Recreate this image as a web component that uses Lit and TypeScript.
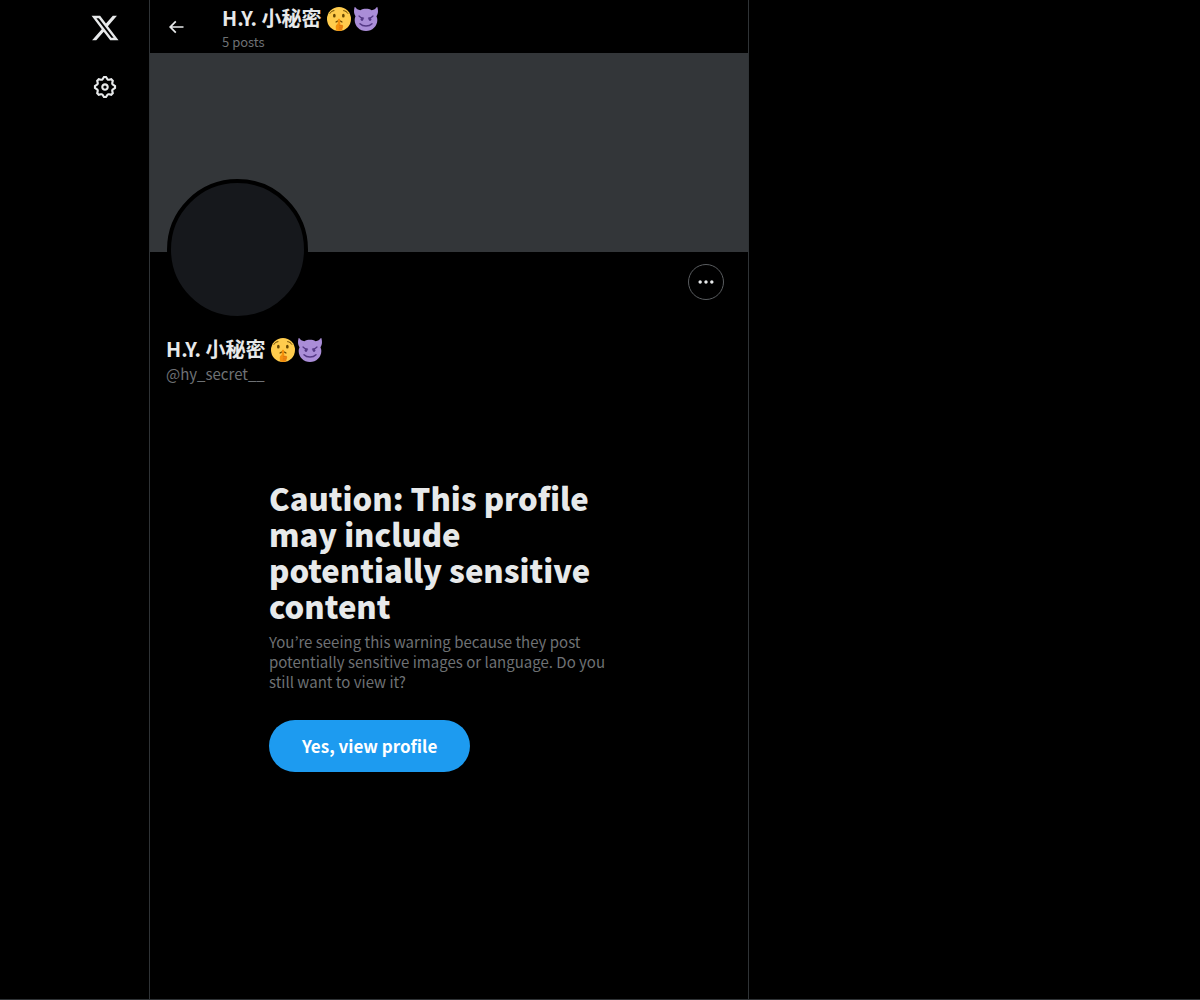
import { LitElement, html, css, svg } from "lit";
import { customElement, property } from "lit/decorators.js";

const ICONS = {
  logo: "M18.244 2.25h3.308l-7.227 8.26 8.502 11.24H16.17l-5.214-6.817L4.99 21.75H1.68l7.73-8.835L1.254 2.25H8.08l4.713 6.231zm-1.161 17.52h1.833L7.084 4.126H5.117z",
  settings:
    "M10.54 1.75h2.92l1.57 2.36c.11.17.32.25.53.21l2.53-.59 2.17 2.17-.58 2.54c-.05.2.04.41.21.53l2.36 1.57v2.92l-2.36 1.57c-.17.12-.26.33-.21.53l.58 2.54-2.17 2.17-2.53-.59c-.21-.04-.42.04-.53.21l-1.57 2.36h-2.92l-1.58-2.36c-.11-.17-.32-.25-.52-.21l-2.54.59-2.17-2.17.58-2.54c.05-.2-.03-.41-.21-.53l-2.35-1.57v-2.92L4.1 8.97c.18-.12.26-.33.21-.53L3.73 5.9 5.9 3.73l2.54.59c.2.04.41-.04.52-.21l1.58-2.36zm1.07 2l-.98 1.47C10.05 6.08 9 6.5 7.99 6.27l-1.46-.34-.6.6.33 1.46c.24 1.01-.18 2.07-1.05 2.64l-1.46.98v.78l1.46.98c.87.57 1.29 1.63 1.05 2.64l-.33 1.46.6.6 1.46-.34c1.01-.23 2.06.19 2.64 1.05l.98 1.47h.78l.97-1.47c.58-.86 1.63-1.28 2.65-1.05l1.45.34.61-.6-.34-1.46c-.23-1.01.18-2.07 1.05-2.64l1.47-.98v-.78l-1.47-.98c-.87-.57-1.28-1.63-1.05-2.64l.34-1.46-.61-.6-1.45.34c-1.02.23-2.07-.19-2.65-1.05l-.97-1.47h-.78zM12 10.5c-.83 0-1.5.67-1.5 1.5s.67 1.5 1.5 1.5c.82 0 1.5-.67 1.5-1.5s-.68-1.5-1.5-1.5zM8.5 12c0-1.93 1.56-3.5 3.5-3.5 1.93 0 3.5 1.57 3.5 3.5s-1.57 3.5-3.5 3.5c-1.94 0-3.5-1.57-3.5-3.5z",
  back: "M7.414 13l5.043 5.04-1.414 1.42L3.586 12l7.457-7.46 1.414 1.42L7.414 11H21v2H7.414z",
  more: "M3 12c0-1.1.9-2 2-2s2 .9 2 2-.9 2-2 2-2-.9-2-2zm9 2c1.1 0 2-.9 2-2s-.9-2-2-2-2 .9-2 2 .9 2 2 2zm7 0c1.1 0 2-.9 2-2s-.9-2-2-2-2 .9-2 2 .9 2 2 2z",
};

@customElement("ui-icon")
class UiIcon extends LitElement {
  @property() name: keyof typeof ICONS = "logo";

  static styles = css`
    :host {
      display: block;
    }
    .icon {
      display: block;
      width: 100%;
      height: 100%;
      fill: currentColor;
    }
  `;

  render() {
    return html`<svg class="icon" viewBox="0 0 24 24" aria-hidden="true">
      ${svg`<path d=${ICONS[this.name]} />`}
    </svg>`;
  }
}

@customElement("display-name")
class DisplayName extends LitElement {
  static styles = css`
    :host {
      display: flex;
      align-items: center;
      gap: 3px;
    }
    .text {
      margin-right: 3px;
    }
    .emoji {
      display: block;
      width: 24px;
      height: 24px;
      margin-top: 2px;
    }
  `;

  render() {
    return html`
      <span class="text">H.Y. 小秘密</span>
      <svg class="emoji" viewBox="0 0 36 36" role="img" aria-label="🤫">
        <circle cx="18" cy="18" r="18" fill="#ffcc4d" />
        <ellipse cx="11" cy="13" rx="2" ry="2.8" fill="#664500" />
        <ellipse cx="24.5" cy="13" rx="2" ry="2.8" fill="#664500" />
        <path
          d="M4.500 9.500C6 7 7.800 5.800 10.500 5.500M25 5.500c2.700.3 4.700 1.500 6.200 4"
          fill="none"
          stroke="#664500"
          stroke-width="1.500"
          stroke-linecap="round"
        />
        <path
          d="M13.500 22.500c2.500-1.800 6.500-1.800 9 0"
          fill="none"
          stroke="#664500"
          stroke-width="1.800"
          stroke-linecap="round"
        />
        <path
          d="M16.300 19.500c.1-2.400 3.300-2.400 3.400 0l.3 7 2.500.3c1.600.3 2 1.500 1.700 2.700l-1.400 4.700c-.4 1.100-1 1.500-2 1.600-2.300.3-4.600.2-6.600-.4-1.200-2.600-1.500-5.600-.6-8 .4-1 1.300-1.600 2.300-1.900z"
          fill="#f4900c"
        />
        <path
          d="M18.800 27.500l4 .8M18.500 30.300h4.200M18.200 33h3.800"
          fill="none"
          stroke="#d2691a"
          stroke-width="1"
          stroke-linecap="round"
        />
      </svg>
      <svg class="emoji" viewBox="0 0 36 36" role="img" aria-label="😈">
        <path
          d="M2 .3c-.5-.5-1-.3-1.200.4C-.5 5-.3 10 2.300 14 1.300 16 1 17.800 1 19.400 1 28.600 8.600 36 18 36s17-7.400 17-16.600c0-1.600-.3-3.400-1.300-5.400 2.600-4 2.800-9 1.500-13.300-.2-.7-.7-.9-1.200-.4-1.500 2.200-4 4-7.500 4.500C24 3.500 21 2.800 18 2.800s-6 .7-8.500 2C6 4.300 3.500 2.500 2 .3z"
          fill="#aa8dd8"
        />
        <path
          d="M7.500 13.500c1.700 1.800 4 3 6.800 3.300M28.500 13.500c-1.700 1.800-4 3-6.800 3.300"
          fill="none"
          stroke="#553986"
          stroke-width="1.800"
          stroke-linecap="round"
        />
        <ellipse cx="12" cy="18.500" rx="2" ry="2.500" fill="#553986" />
        <ellipse cx="24" cy="18.500" rx="2" ry="2.500" fill="#553986" />
        <path
          d="M9 25c4.500 4.700 13.500 4.700 18 0"
          fill="none"
          stroke="#553986"
          stroke-width="2.200"
          stroke-linecap="round"
        />
      </svg>
    `;
  }
}

@customElement("app-root")
class AppRoot extends LitElement {
  static styles = css`
    :host {
      display: block;
      background: #000;
      color: #e7e9ea;
      font-family: "Noto Sans CJK JP", "Noto Sans", sans-serif;
      font-size: 15px;
      line-height: 20px;
    }
    * {
      box-sizing: border-box;
    }
    .page {
      display: grid;
      grid-template-columns: 88px minmax(0, 600px) minmax(0, 390px);
      justify-content: center;
      min-height: 100vh;
      border-bottom: 1px solid #2f3336;
    }
    .nav {
      display: flex;
      flex-direction: column;
      align-items: center;
      gap: 7px;
      padding-top: 2px;
    }
    .nav-link {
      display: grid;
      place-items: center;
      width: 52px;
      height: 52px;
      border-radius: 50%;
      color: inherit;
    }
    .logo {
      width: 30px;
      height: 30px;
    }
    .settings {
      width: 26px;
      height: 26px;
    }
    .column {
      border: solid #2f3336;
      border-width: 0 1px;
    }
    .topbar {
      display: flex;
      align-items: center;
      height: 53px;
      padding: 0 16px;
    }
    .back {
      display: grid;
      place-items: center;
      width: 20px;
      height: 20px;
      margin-right: 36px;
      padding: 0;
      border: 0;
      background: none;
      color: inherit;
    }
    .glyph {
      width: 20px;
      height: 20px;
    }
    .title {
      margin: 0;
      font-size: 20px;
      line-height: 30px;
      font-weight: 700;
    }
    .muted {
      margin: 0;
      color: #6e7174;
    }
    .count {
      font-size: 13px;
      line-height: 18px;
    }
    .banner {
      height: 199px;
      background: #333639;
    }
    .profile {
      padding: 0 16px;
    }
    .profile-top {
      display: flex;
      justify-content: space-between;
      align-items: flex-start;
      padding: 0 8px 0 1px;
    }
    .avatar {
      width: 141px;
      height: 141px;
      margin-top: -73px;
      border: 4px solid #000;
      border-radius: 50%;
      background: #16181c;
    }
    .more {
      display: grid;
      place-items: center;
      width: 36px;
      height: 36px;
      margin-top: 12px;
      padding: 0;
      border: 1px solid #5a5d60;
      border-radius: 50%;
      background: none;
      color: inherit;
    }
    .identity {
      padding-top: 14px;
    }
    .warning {
      max-width: 360px;
      margin: 96px auto 0;
    }
    .heading {
      margin: 0 0 8px;
      font-size: 31px;
      line-height: 36px;
      font-weight: 800;
    }
    .view {
      height: 52px;
      margin-top: 28px;
      padding: 0 33px;
      border: 0;
      border-radius: 26px;
      background: #1d9bf0;
      color: #fff;
      font: inherit;
      font-size: 17px;
      font-weight: 700;
    }
  `;

  render() {
    return html`
      <div class="page">
        <nav class="nav">
          <a class="nav-link" href="#home" aria-label="X">
            <ui-icon class="logo" name="logo"></ui-icon>
          </a>
          <a class="nav-link" href="#settings" aria-label="Settings">
            <ui-icon class="settings" name="settings"></ui-icon>
          </a>
        </nav>
        <main class="column">
          <header class="topbar">
            <button class="back" aria-label="Back">
              <ui-icon class="glyph" name="back"></ui-icon>
            </button>
            <div>
              <h2 class="title"><display-name></display-name></h2>
              <p class="muted count">5 posts</p>
            </div>
          </header>
          <div class="banner"></div>
          <section class="profile">
            <div class="profile-top">
              <div class="avatar"></div>
              <button class="more" aria-label="More">
                <ui-icon class="glyph" name="more"></ui-icon>
              </button>
            </div>
            <div class="identity">
              <div class="title"><display-name></display-name></div>
              <p class="muted">@hy_secret__</p>
            </div>
          </section>
          <section class="warning">
            <h1 class="heading">
              Caution: This profile may include potentially sensitive content
            </h1>
            <p class="muted">
              You’re seeing this warning because they post potentially sensitive
              images or language. Do you still want to view it?
            </p>
            <button class="view">Yes, view profile</button>
          </section>
        </main>
      </div>
    `;
  }
}
